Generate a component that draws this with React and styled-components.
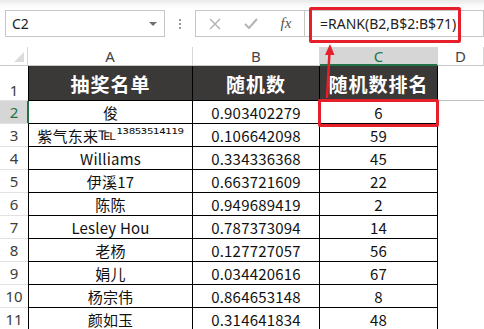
import React from "react";
import styled, { createGlobalStyle, css } from "styled-components";

const Global = createGlobalStyle`
  html, body { margin: 0; padding: 0; background: #fff; }
  body { width: 484px; height: 329px; overflow: hidden; font-family: "Noto Sans CJK SC", "Noto Sans", sans-serif; }
`;

const Page = styled.div`
  position: relative;
  width: 484px;
  height: 329px;
  overflow: hidden;
  background: #fff;
`;

const FormulaBar = styled.div`
  height: 27px;
  padding: 10px 0 10px 5px;
  display: flex;
  background: linear-gradient(to bottom, #e9e9e9 0px, #fbfbfb 6px, #fff 10px);
`;

const NameBox = styled.div`
  width: 160px;
  box-sizing: border-box;
  border: 1px solid #c6c6c6;
  background: #fff;
  display: flex;
  align-items: center;
  justify-content: space-between;
  padding: 0 7px 0 6px;
  font-family: "Noto Sans", sans-serif;
  font-size: 14px;
  color: #222;
`;

const Caret = styled.span`
  width: 0;
  height: 0;
  border-left: 4px solid transparent;
  border-right: 4px solid transparent;
  border-top: 4px solid #707070;
`;

const Dots = styled.div`
  width: 30px;
  display: flex;
  flex-direction: column;
  align-items: center;
  justify-content: center;
  gap: 2px;
  & > span { width: 2px; height: 2px; background: #9a9a9a; }
`;

const FxGroup = styled.div`
  width: 110px;
  box-sizing: border-box;
  border: 1px solid #c6c6c6;
  background: #fff;
  display: flex;
  align-items: center;
`;

const FxButton = styled.div`
  width: ${(p) => p.$w}px;
  display: flex;
  align-items: center;
  justify-content: center;
  color: #b8b8b8;
`;

const FxText = styled.span`
  font-family: "Liberation Serif", serif;
  font-style: italic;
  font-size: 15px;
  color: #555;
`;

const FormulaInput = styled.div`
  flex: 1;
  box-sizing: border-box;
  border: 1px solid #c6c6c6;
  border-left: none;
  background: #fff;
  display: flex;
  align-items: center;
  padding-left: 15px;
  font-family: "Noto Sans", sans-serif;
  font-size: 14px;
  color: #222;
`;

const Sheet = styled.div`
  display: grid;
  grid-template-columns: 28px 165px 127px 118px 46px;
  grid-template-rows: 19px 35px repeat(10, 23px);
`;

const ColHead = styled.div`
  box-sizing: border-box;
  border-right: 1px solid #d6d6d6;
  border-bottom: 1px solid #c8c8c8;
  display: flex;
  align-items: center;
  justify-content: center;
  font-family: "Noto Sans", sans-serif;
  font-size: 15px;
  color: #444;
  background: #fff;
  ${(p) =>
    p.$sel &&
    css`
      background: #d6d6d6;
      color: #217346;
      border-bottom: 2px solid #217346;
    `}
`;

const Corner = styled(ColHead)`
  position: relative;
  &::after {
    content: "";
    position: absolute;
    right: 3px;
    bottom: 3px;
    border-left: 10px solid transparent;
    border-bottom: 10px solid #dcdcdc;
  }
`;

const RowHead = styled.div`
  box-sizing: border-box;
  border-bottom: 1px solid #e2e2e2;
  display: flex;
  justify-content: center;
  align-items: ${(p) => (p.$bottom ? "flex-end" : "center")};
  font-family: "Noto Sans", sans-serif;
  font-size: 15px;
  line-height: 20px;
  color: #3d3d3d;
  background: #fff;
  ${(p) =>
    p.$sel &&
    css`
      background: #d6d6d6;
      color: #217346;
      box-shadow: inset -1px 0 0 #217346;
    `}
`;

const Cell = styled.div`
  box-sizing: border-box;
  border-right: 1px solid #000;
  border-bottom: 1px solid #000;
  ${(p) => p.$first && css`border-left: 1px solid ${p.$sel ? "#217346" : "#000"};`}
  display: flex;
  align-items: center;
  justify-content: center;
  white-space: nowrap;
  font-family: "Noto Sans CJK SC", sans-serif;
  font-size: 15px;
  letter-spacing: 0.2px;
  color: #111;
  background: #fff;
`;

const HeadCell = styled(Cell)`
  background: #3b3838;
  color: #fff;
  font-weight: 700;
  font-size: 19px;
  letter-spacing: 1px;
`;

const Blank = styled.div`
  background: #fff;
  ${(p) => p.$line && css`border-bottom: 1px solid #bdbdbd; box-sizing: border-box;`}
`;

const Tel = styled.span`
  font-family: "DejaVu Sans", sans-serif;
  font-size: 17px;
  line-height: 1;
  align-self: flex-start;
  margin-top: 2px;
  letter-spacing: 0;
`;

const Sup = styled.span`
  font-family: "DejaVu Sans", sans-serif;
  font-size: 16px;
  line-height: 1;
  align-self: flex-start;
  margin-top: 2px;
  letter-spacing: -0.3px;
`;

const RedBox = styled.div`
  position: absolute;
  box-sizing: border-box;
  border: 3px solid #e5202b;
  border-radius: 2px;
  left: ${(p) => p.$x}px;
  top: ${(p) => p.$y}px;
  width: ${(p) => p.$w}px;
  height: ${(p) => p.$h}px;
`;

const ArrowLayer = styled.svg`
  position: absolute;
  left: 0;
  top: 0;
  pointer-events: none;
`;

const rows = [
  ["俊", "0.903402279", "6"],
  [null, "0.106642098", "59"],
  ["Williams", "0.334336368", "45"],
  ["伊溪17", "0.663721609", "22"],
  ["陈陈", "0.949689419", "2"],
  ["Lesley Hou", "0.787373094", "14"],
  ["老杨", "0.127727057", "56"],
  ["娟儿", "0.034420616", "67"],
  ["杨宗伟", "0.864653148", "8"],
  ["颜如玉", "0.314641834", "48"],
];

export default function App() {
  return (
    <Page>
      <Global />
      <FormulaBar>
        <NameBox>
          <span>C2</span>
          <Caret />
        </NameBox>
        <Dots>
          <span />
          <span />
          <span />
        </Dots>
        <FxGroup>
          <FxButton $w={38}>
            <svg width="12" height="12" viewBox="0 0 12 12">
              <path d="M1 1 L11 11 M11 1 L1 11" stroke="#b5b5b5" strokeWidth="1.5" />
            </svg>
          </FxButton>
          <FxButton $w={34}>
            <svg width="14" height="11" viewBox="0 0 14 11">
              <path d="M1 6 L5 10 L13 1" stroke="#b5b5b5" strokeWidth="2" fill="none" />
            </svg>
          </FxButton>
          <FxButton $w={36}>
            <FxText>fx</FxText>
          </FxButton>
        </FxGroup>
        <FormulaInput>=RANK(B2,B$2:B$71)</FormulaInput>
      </FormulaBar>

      <Sheet>
        <Corner />
        <ColHead>A</ColHead>
        <ColHead>B</ColHead>
        <ColHead $sel>C</ColHead>
        <ColHead>D</ColHead>

        <RowHead $bottom>1</RowHead>
        <HeadCell $first>抽奖名单</HeadCell>
        <HeadCell>随机数</HeadCell>
        <HeadCell>随机数排名</HeadCell>
        <Blank $line />

        {rows.map((r, i) => {
          const sel = i === 0;
          return (
            <React.Fragment key={i}>
              <RowHead $sel={sel}>{i + 2}</RowHead>
              <Cell $first $sel={sel}>
                {r[0] === null ? (
                  <>
                    紫气东来<Tel>℡</Tel><Sup>¹³⁸⁵³⁵¹⁴¹¹⁹</Sup>
                  </>
                ) : (
                  r[0]
                )}
              </Cell>
              <Cell>{r[1]}</Cell>
              <Cell>{r[2]}</Cell>
              <Blank />
            </React.Fragment>
          );
        })}
      </Sheet>

      <RedBox $x={309} $y={7} $w={152} $h={36} />
      <RedBox $x={318} $y={99} $w={121} $h={28} />
      <ArrowLayer width="484" height="329">
        <line x1="327" y1="98" x2="329.5" y2="52" stroke="#e5202b" strokeWidth="2.5" />
        <polygon points="330,44 325,55 334.5,55" fill="#e5202b" />
      </ArrowLayer>
    </Page>
  );
}
